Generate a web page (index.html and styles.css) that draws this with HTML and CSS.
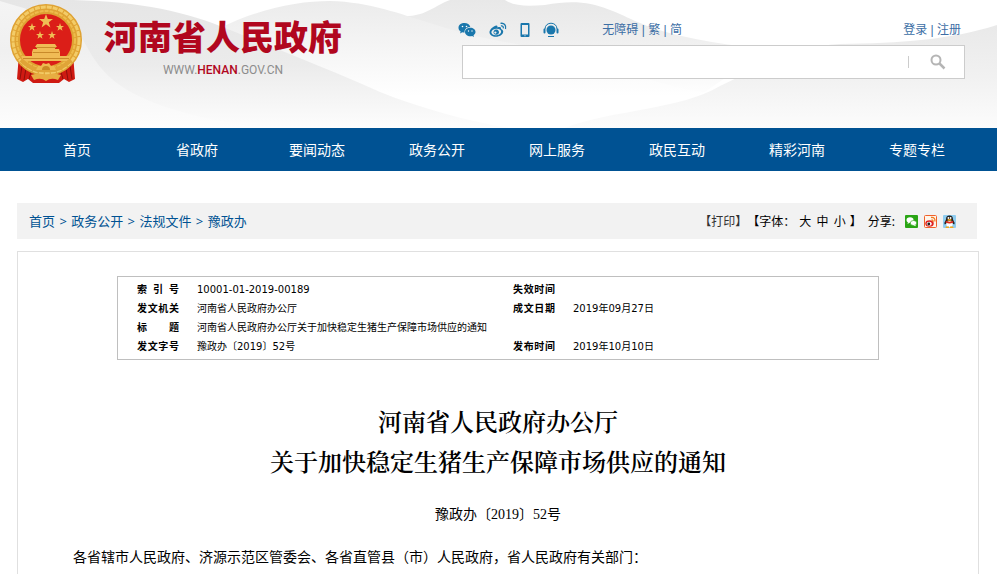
FILE: index.html
```
<!DOCTYPE html>
<html lang="zh-CN">
<head>
    <meta charset="UTF-8">
    <meta name="viewport" content="width=device-width, initial-scale=1.0">
    <title>河南省人民政府办公厅关于加快稳定生猪生产保障市场供应的通知</title>
    <link rel="stylesheet" href="styles.css">
</head>
<body>
    <header class="header">
        <svg class="header-bg" viewBox="0 0 997 128" preserveAspectRatio="none" aria-hidden="true">
            <defs>
                <linearGradient id="hill" x1="0" y1="0" x2="0" y2="128" gradientUnits="userSpaceOnUse">
                    <stop offset="0" stop-color="#e8e8e8"/>
                    <stop offset="0.3" stop-color="#efefef"/>
                    <stop offset="0.7" stop-color="#fdfdfd"/>
                </linearGradient>
                <linearGradient id="hill-mid" x1="0" y1="0" x2="0" y2="128" gradientUnits="userSpaceOnUse">
                    <stop offset="0" stop-color="#ebebeb"/>
                    <stop offset="0.45" stop-color="#f7f7f7"/>
                    <stop offset="0.75" stop-color="#fff"/>
                </linearGradient>
                <linearGradient id="hill-back" x1="0" y1="0" x2="0" y2="128" gradientUnits="userSpaceOnUse">
                    <stop offset="0" stop-color="#e6e6e6"/>
                    <stop offset="0.5" stop-color="#ebebeb"/>
                    <stop offset="1" stop-color="#fdfdfd"/>
                </linearGradient>
                <linearGradient id="hill-left" x1="0" y1="0" x2="0" y2="128" gradientUnits="userSpaceOnUse">
                    <stop offset="0" stop-color="#f4f4f4"/>
                    <stop offset="0.4" stop-color="#f0f0f0"/>
                    <stop offset="1" stop-color="#fdfdfd"/>
                </linearGradient>
                <linearGradient id="hill-right" x1="0" y1="25" x2="0" y2="128" gradientUnits="userSpaceOnUse">
                    <stop offset="0" stop-color="#e9e9e9"/>
                    <stop offset="0.5" stop-color="#f1f1f1"/>
                    <stop offset="1" stop-color="#fcfcfc"/>
                </linearGradient>
            </defs>
            <path fill="url(#hill)" d="M400 16C425 18 435 5 450 0H505C515 7 530 6 545 5C590-4 610 10 640 23C680 40 730 44 765 50L705 92H400Z"/>
            <path fill="url(#hill-mid)" d="M220 28C260 8 300 1 330 1C370 2 400 14 430 23C480 40 520 43 560 54C620 70 670 88 705 92C660 110 620 128 560 128H220Z"/>
            <path fill="url(#hill-back)" d="M0 0H60C130 0 180 10 220 26C280 50 330 70 380 92C420 108 470 122 510 128H0Z"/>
            <path fill="url(#hill-left)" d="M0 1C30 10 70 20 83 40C96 62 105 85 160 105C190 116 230 124 270 128H0Z"/>
            <path fill="url(#hill-right)" d="M565 128C610 110 680 110 720 86C760 66 800 46 840 44C900 43 950 40 997 25V128Z"/>
        </svg>
        <div class="wrap header-inner">
            <a class="logo" href="#" aria-label="河南省人民政府">
                <svg class="emblem" viewBox="0 0 74 80" aria-hidden="true">
                    <path fill="#cf1a12" d="M10 50L8 75L14 78L19 75L24 79H50L55 75L60 78L66 75L64 50Z"/>
                    <path fill="none" stroke="#8e0f0b" d="M13 62L11 75M17 64L15 76M22 68L20 75M61 62L63 75M57 64L59 76M52 68L54 75"/>
                    <circle cx="37" cy="36" r="31" fill="#db1e18"/>
                    <circle cx="37" cy="36" r="31" fill="none" stroke="#dfa233" stroke-width="10"/>
                    <circle cx="37" cy="36" r="33" fill="none" stroke="#f3cc68" stroke-width="3" stroke-dasharray="5 1"/>
                    <circle cx="37" cy="36" r="29" fill="none" stroke="#eebc4c" stroke-width="2" stroke-dasharray="4 1"/>
                    <path fill="#efbe55" d="M37 10l1.800 5h5.200l-4.200 3.200 1.600 5.200-4.400-3.100-4.400 3.100 1.600-5.200-4.200-3.200h5.200zM23 19l1 3h3l-2.400 1.800.9 3-2.500-1.800-2.500 1.800.9-3-2.400-1.800h3zM51 19l1 3h3l-2.400 1.800.9 3-2.500-1.800-2.500 1.800.9-3-2.400-1.800h3zM31 27l1 3h3l-2.400 1.800.9 3-2.500-1.800-2.500 1.800.9-3-2.400-1.800h3zM43 27l1 3h3l-2.400 1.800.9 3-2.500-1.800-2.500 1.800.9-3-2.400-1.800h3z"/>
                    <path fill="#f0bb55" d="M28 40h18l2 3h-2v2h4l1 3v4h10v5H13v-5h10v-4l1-3h4v-2h-2z"/>
                    <path stroke="#c98a2a" fill="none" d="M27 43.500h20M24 48.500h26M14 54.500h46"/>
                    <path fill="none" stroke="#e0a437" stroke-width="4" d="M12 56Q24 68 37 66Q50 68 62 56"/>
                    <path fill="#edbb50" d="M27 66L29 62L32 62L34 59L37 60L40 59L42 62L45 62L47 66Z"/>
                    <path fill="#c98a24" d="M33 66a4 4 0 0 1 8 0z"/>
                    <path fill="#e7ad42" d="M22 71Q30 68 37 71Q44 68 52 71L49 76Q42 73 37 77Q32 73 25 76Z"/>
                </svg>
                <span class="logo-text">
                    <span class="logo-name">河南省人民政府</span>
                    <span class="logo-url">WWW.<b>HENAN</b>.GOV.CN</span>
                </span>
            </a>
            <div class="header-right">
                <div class="top-links">
                    <div class="top-icons">
                        <a href="#" aria-label="微信">
                            <svg width="18" height="16" viewBox="0 0 18 16"><path fill="#1a77ac" d="M6.500 1C3 1 .5 3 .5 5.700c0 1.600.8 2.900 2.200 3.800L2 11.500l2.300-1.200c.8.200 1.500.3 2.300.3C6 7.500 8.500 5 12.300 5 11.700 2.600 9.400 1 6.500 1z"/><path fill="#1a77ac" d="M12.300 5.800C9.300 5.800 7 7.700 7 10s2.300 4.300 5.300 4.300c.6 0 1.200-.1 1.800-.3L16 15l-.5-1.800c1.200-.8 2-1.900 2-3.200 0-2.300-2.300-4.200-5.200-4.200z"/><g fill="#fff"><circle cx="4.500" cy="4.500" r=".8"/><circle cx="8.500" cy="4.500" r=".8"/><circle cx="10.500" cy="9" r=".7"/><circle cx="14" cy="9" r=".7"/></g></svg>
                        </a>
                        <a href="#" aria-label="微博">
                            <svg width="18" height="16" viewBox="0 0 18 16"><path fill="#1a77ac" fill-rule="evenodd" d="M6.500 3.800c1.600-.6 2.300.2 1.900 1.700 2.500-1 4.200-.4 3.600 1.500 1.600.6 2.300 1.500 2.200 2.800-.2 2.700-3.300 5-7.300 5C3.300 14.800.5 13 .5 10.300c0-2.200 2.800-5.500 6-6.500zM7 6.800c-2.800.3-4.800 2-4.600 3.800.2 1.800 2.400 2.900 5.200 2.600 2.700-.3 4.700-2 4.500-3.800C11.900 7.600 9.700 6.500 7 6.800z"/><path fill="#1a77ac" fill-rule="evenodd" d="M7.200 7.600a2.800 2.600 0 1 0 .1 0zM6.400 9.600a1.100 1 0 1 1-.1 0z"/><path fill="none" stroke="#1a77ac" stroke-width="1.300" d="M11.500 1.400c3.500-.8 6 2 5 5.600M11.900 3.900c1.800-.3 2.800.8 2.300 2.500"/></svg>
                        </a>
                        <a href="#" aria-label="手机版">
                            <svg width="10" height="16" viewBox="0 0 10 16"><path fill="#1a77ac" fill-rule="evenodd" d="M1.500 1h7Q9.500 1 9.500 2v12q0 1-1 1h-7q-1 0-1-1V2q0-1 1-1zM2 3v9.500h6V3zM4.500 13.300v1h1v-1z"/></svg>
                        </a>
                        <a href="#" aria-label="客服">
                            <svg width="16" height="16" viewBox="0 0 16 16"><circle cx="8" cy="8" r="4.500" fill="#1a77ac"/><path fill="none" stroke="#1a77ac" d="M2 7C2-.7 14-.7 14 7"/><path stroke="#1a77ac" stroke-width="2" stroke-linecap="round" d="M1.500 7.500v3M14.500 7.500v3"/><path stroke="#1a77ac" d="M5 14.500h6"/></svg>
                        </a>
                    </div>
                    <div class="lang-links"><a href="#">无障碍</a> | <a href="#">繁</a> | <a href="#">简</a></div>
                    <div class="user-links"><a href="#">登录</a> | <a href="#">注册</a></div>
                </div>
                <form class="search">
                    <input class="search-input" type="text" aria-label="搜索">
                    <button class="search-btn" type="button" aria-label="搜索">
                        <svg width="16" height="16" viewBox="0 0 16 16"><circle cx="6" cy="6" r="4.500" fill="none" stroke="#b5b5b5" stroke-width="2"/><path stroke="#b5b5b5" stroke-width="2.500" d="M9.500 9.500l5 5"/></svg>
                    </button>
                </form>
            </div>
        </div>
    </header>

    <nav class="nav">
        <ul class="wrap nav-list">
            <li><a href="#">首页</a></li>
            <li><a href="#">省政府</a></li>
            <li><a href="#">要闻动态</a></li>
            <li><a href="#">政务公开</a></li>
            <li><a href="#">网上服务</a></li>
            <li><a href="#">政民互动</a></li>
            <li><a href="#">精彩河南</a></li>
            <li><a href="#">专题专栏</a></li>
        </ul>
    </nav>

    <div class="wrap toolbar">
        <div class="crumbs"><a href="#">首页</a> &gt; <a href="#">政务公开</a> &gt; <a href="#">法规文件</a> &gt; <a href="#">豫政办</a></div>
        <div class="tools">
            <a class="print" href="#">【打印】</a>
            <span class="font-size">【字体： <a href="#">大</a> <a href="#">中</a> <a href="#">小</a> 】</span>
            <span class="share">分享:</span>
            <div class="share-icons">
                <a href="#" aria-label="分享到微信">
                    <svg width="13" height="13" viewBox="0 0 13 13"><rect width="13" height="13" rx="1" fill="#2aa515"/><ellipse cx="5" cy="5" rx="3.500" ry="2.800" fill="#fff"/><ellipse cx="8.500" cy="8" rx="3.200" ry="2.500" fill="#fff" stroke="#2aa515" stroke-width=".6"/><path fill="#fff" d="M3 7l-.5 2L5 7.500zM10 9.500l1 1.800-2.500-1z"/></svg>
                </a>
                <a href="#" aria-label="分享到微博">
                    <svg width="13" height="13" viewBox="0 0 13 13"><rect x=".5" y=".5" width="12" height="12" rx="1" fill="#fff4e8" stroke="#f0602a"/><ellipse cx="5.500" cy="8.500" rx="4.200" ry="3.200" fill="#df2020"/><ellipse cx="5.200" cy="8.800" rx="2.600" ry="2" fill="#fff"/><circle cx="4.800" cy="9" r="1.400" fill="#222"/><path fill="none" stroke="#f07a20" stroke-width="1.300" d="M7 2.500c3-.5 4.500 1.500 3.800 4M7.500 4.800c1.300 0 1.800.7 1.500 2"/></svg>
                </a>
                <a href="#" aria-label="分享到QQ">
                    <svg width="13" height="13" viewBox="0 0 13 13"><rect width="13" height="13" rx="1" fill="#8fcdf0"/><path fill="#222" d="M6.500.5C4 .5 3 2 3 4.500L1.300 8l.5 1.500L3.500 8.500h6l1.700 1 .5-1.500L10 4.500C10 2 9 .5 6.500.5z"/><ellipse cx="6.500" cy="9" rx="3.200" ry="3" fill="#fff"/><path fill="#e02818" d="M2.800 5.800q3.700 2 7.400 0v1.700q-3.700 2-7.400 0z"/><ellipse cx="6.500" cy="4.900" rx="2.200" ry=".9" fill="#f5a81c"/><circle cx="5.400" cy="3" r=".9" fill="#fff"/><circle cx="7.600" cy="3" r=".9" fill="#fff"/><path fill="#f5a81c" d="M3 11.500h3v1.500H2.500zM7 11.500h3l.5 1.500H7z"/></svg>
                </a>
            </div>
        </div>
    </div>

    <main class="wrap content">
        <table class="meta">
            <tr>
                <th scope="row"><span>索 引 号</span></th>
                <td class="meta-main">10001-01-2019-00189</td>
                <th scope="row"><span>失效时间</span></th>
                <td></td>
            </tr>
            <tr>
                <th scope="row"><span>发文机关</span></th>
                <td>河南省人民政府办公厅</td>
                <th scope="row"><span>成文日期</span></th>
                <td>2019年09月27日</td>
            </tr>
            <tr>
                <th scope="row"><span>标 题</span></th>
                <td colspan="3">河南省人民政府办公厅关于加快稳定生猪生产保障市场供应的通知</td>
            </tr>
            <tr>
                <th scope="row"><span>发文字号</span></th>
                <td>豫政办〔2019〕52号</td>
                <th scope="row"><span>发布时间</span></th>
                <td>2019年10月10日</td>
            </tr>
        </table>
        <article class="article">
            <h1>河南省人民政府办公厅<br>关于加快稳定生猪生产保障市场供应的通知</h1>
            <p class="doc-no">豫政办〔2019〕52号</p>
            <p>各省辖市人民政府、济源示范区管委会、各省直管县（市）人民政府，省人民政府有关部门：</p>
        </article>
    </main>
</body>
</html>
```

FILE: styles.css
```
* {
    margin: 0;
    padding: 0;
    box-sizing: border-box;
}

body {
    background: #fff;
    color: #000;
    font-family: "Microsoft YaHei", "Noto Sans", "Noto Sans CJK SC", sans-serif;
    font-size: 12px;
}

a {
    color: inherit;
    text-decoration: none;
}

svg {
    display: block;
}

ul {
    list-style: none;
}

.wrap {
    margin: 0 20px 0 17px;
}

/* header */
.header {
    position: relative;
    height: 128px;
    overflow: hidden;
}

.header-bg {
    position: absolute;
    top: 0;
    left: 0;
    width: 100%;
    height: 100%;
}

.header-inner {
    position: relative;
    display: flex;
    justify-content: space-between;
    margin: 0 32px 0 9px;
}

.logo {
    display: flex;
    gap: 21px;
    padding-top: 4px;
}

.emblem {
    width: 74px;
    height: 80px;
}

.logo-text {
    display: flex;
    flex-direction: column;
    align-items: center;
    padding-top: 12px;
}

.logo-name {
    color: #b1071e;
    font-size: 34px;
    font-weight: 900;
    line-height: 42px;
}

.logo-url {
    color: #8c8c8c;
    font-family: Roboto, sans-serif;
    font-size: 12px;
    line-height: 24px;
}

.logo-url b {
    color: #b1071e;
    font-weight: 500;
}

.header-right {
    width: 53%;
    padding-top: 20px;
}

.top-links {
    display: flex;
    align-items: center;
    height: 20px;
    padding-right: 4px;
    color: #3c6ea5;
    font-family: "Liberation Sans", "Noto Sans CJK SC", sans-serif;
    line-height: 20px;
}

.top-icons {
    display: flex;
    gap: 13px;
}

.lang-links {
    margin-left: 43px;
}

.user-links {
    margin-left: auto;
}

.search {
    display: flex;
    align-items: center;
    height: 34px;
    margin: 5px 0 0 4px;
    background: #fff;
    border: 1px solid #ccc;
}

.search-input {
    flex: 1;
    height: 100%;
    padding: 0 10px;
    border: none;
    outline: none;
    background: none;
}

.search-btn {
    display: flex;
    justify-content: center;
    align-items: center;
    width: 56px;
    height: 12px;
    padding-left: 2px;
    border: none;
    border-left: 1px solid #ccc;
    background: none;
    cursor: pointer;
}

/* nav */
.nav {
    background: #005293;
}

.nav-list {
    display: flex;
}

.nav-list li {
    flex: 1;
    text-align: center;
}

.nav-list a {
    display: block;
    color: #fff;
    font-size: 14px;
    line-height: 43px;
}

/* breadcrumb bar */
.toolbar {
    display: flex;
    justify-content: space-between;
    align-items: center;
    height: 36px;
    margin-top: 32px;
    padding: 0 21px 0 11px;
    background: #f2f2f2;
}

.crumbs {
    color: #005293;
    font-size: 13px;
    line-height: 16px;
}

.crumbs a {
    margin: 0 1px;
}

.tools {
    display: flex;
    align-items: center;
}

.print {
    color: #333;
}

.font-size a {
    margin: 0 1px;
}

.share {
    margin: 0 10px 0 6px;
}

.share-icons {
    display: flex;
    gap: 6px;
}

/* document */
.content {
    margin-top: 12px;
    margin-right: 18px;
    padding: 24px 55px 0;
    border: 1px solid #e0e0e0;
    border-bottom: none;
}

.meta {
    width: calc(100% - 88px);
    margin: 0 44px;
    padding: 3px 0 3px 19px;
    border: 1px solid #bfbfbf;
    border-spacing: 0;
    table-layout: fixed;
    font-family: "DejaVu Sans", "Noto Sans CJK SC", sans-serif;
    font-size: 10px;
    line-height: 19px;
}

.meta th {
    width: 60px;
    text-align: left;
}

.meta th span {
    display: block;
    width: 42px;
    text-align: justify;
    text-align-last: justify;
}

.meta-main {
    width: 316px;
}

.article {
    padding-top: 41px;
    font-family: SimSun, "Liberation Serif", "Noto Sans CJK SC", serif;
    font-size: 14px;
    line-height: 43px;
}

.article h1 {
    font-family: SimSun, "Noto Serif CJK SC", "Noto Sans CJK SC", serif;
    font-size: 24px;
    font-weight: 600;
    line-height: 40px;
    text-align: center;
}

.doc-no {
    margin-top: 12px;
    text-align: center;
}
```
